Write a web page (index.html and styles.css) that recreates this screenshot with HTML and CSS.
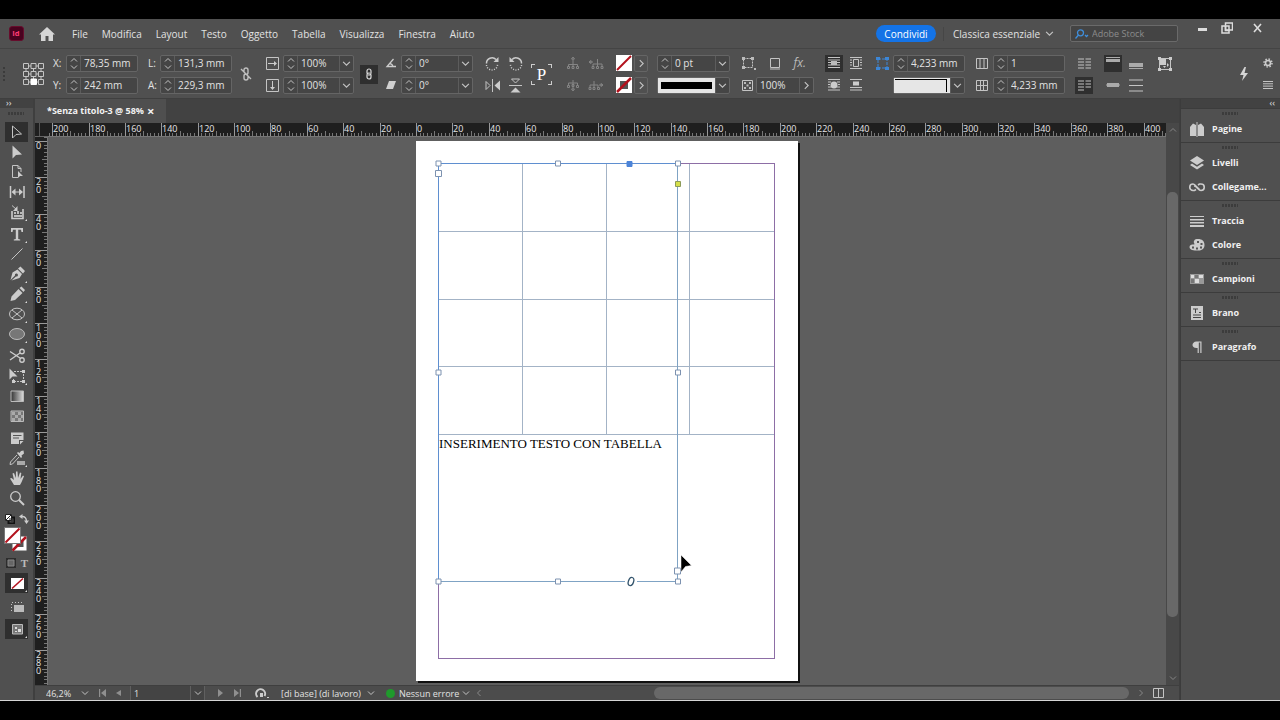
FILE: index.html
```html
<!DOCTYPE html>
<html lang="it">
<head>
<meta charset="utf-8">
<title>Senza titolo-3</title>
<link rel="stylesheet" href="styles.css">
</head>
<body>
<svg class="sprite" aria-hidden="true">
  <symbol id="down" viewBox="0 0 8 8"><path d="M1 2.500l3 3 3-3" class="ln"/></symbol>
  <symbol id="up" viewBox="0 0 8 8"><path d="M1 5.500l3-3 3 3" class="ln"/></symbol>
  <symbol id="right" viewBox="0 0 8 8"><path d="M2.500 1l3 3-3 3" class="ln"/></symbol>
  <symbol id="left" viewBox="0 0 8 8"><path d="M5.500 1l-3 3 3 3" class="ln"/></symbol>
  <symbol id="step" viewBox="0 0 14 15"><path d="M4 5.500l3-3 3 3M4 9.500l3 3 3-3" class="ln"/></symbol>
  <symbol id="none" viewBox="0 0 16 16"><path d="M0 0h16v16H0z" fill="#fff"/><path d="M1 15L15 1" stroke="#b3121d" stroke-width="2"/></symbol>
  <symbol id="none-stroke" viewBox="0 0 16 16"><path d="M0 0h16v16H0z" fill="#fff"/><path d="M4 4h8v8H4z" fill="#555"/><path d="M1 15L15 1" stroke="#b3121d" stroke-width="2.500"/></symbol>
</svg>
<div class="app">
  <header class="menubar">
    <svg class="logo" viewBox="0 0 16 16"><rect x=".5" y=".5" width="15" height="15" rx="3" fill="#49021f" stroke="#6b0a2c"/><text x="3.500" y="11" class="logo-text">Id</text></svg>
    <button class="plain home" aria-label="Home"><svg width="16" height="14" viewBox="0 0 16 14"><path d="M8 0L0 7.500h2V14h4.500V9h3v5H14V7.500h2z" fill="#d5d5d5"/></svg></button>
    <nav class="menus">
      <button class="plain">File</button><button class="plain">Modifica</button><button class="plain">Layout</button><button class="plain">Testo</button><button class="plain">Oggetto</button><button class="plain">Tabella</button><button class="plain">Visualizza</button><button class="plain">Finestra</button><button class="plain">Aiuto</button>
    </nav>
    <button class="share">Condividi</button>
    <label class="workspace"><select aria-label="Area di lavoro"><option>Classica essenziale</option></select><svg width="9" height="9"><use href="#down"/></svg></label>
    <label class="search"><svg width="14" height="10" viewBox="0 0 14 10" fill="none" stroke="#3f8edb" stroke-width="1.300"><circle cx="5.500" cy="3.800" r="3"/><path d="M3.500 6L.5 9.500M10 6l1.500 1.500L13 6"/></svg><input type="text" placeholder="Adobe Stock" aria-label="Adobe Stock"></label>
    <div class="window-buttons">
      <button class="plain" aria-label="Riduci"><svg width="10" height="12" viewBox="0 0 10 12"><path d="M0 6h9v3H0z" fill="#ddd"/></svg></button>
      <button class="plain" aria-label="Ripristina"><svg width="12" height="12" viewBox="0 0 12 12" fill="none" stroke="#ddd" stroke-width="1.500"><path d="M4.500 3V1h7v7H8M1 4h3.500v4.500H8V11H1z"/><path d="M4.500 4V8H8V4z"/></svg></button>
      <button class="plain close" aria-label="Chiudi"><svg width="10" height="12" viewBox="0 0 10 12" fill="none" stroke="#ddd" stroke-width="1.600"><path d="M1 2l7 8M8 2L1 10"/></svg></button>
    </div>
  </header>

  <section class="control" aria-label="Controllo">
    <span class="grip-v"></span>
    <svg class="refpoint" width="21" height="22" viewBox="0 0 21 22" fill="none" stroke="#c4c4c4"><path d="M5 3h3M13 3h3M5 11h3M13 11h3M5 19h3M13 19h3M3 5v3M3 13v3M10.500 5v3M10.500 13v3M18 5v3M18 13v3"/><path d="M.5.5h5v5h-5zM8 .5h5v5H8zM15.500.5h5v5h-5zM.5 8.500h5v5h-5zM8 8.500h5v5H8zM15.500 8.500h5v5h-5zM.5 16.500h5v5h-5zM15.500 16.500h5v5h-5z"/><path d="M8 16h5.500v5.500H8z" fill="#fff" stroke="#fff"/></svg>

    <div class="group g-xy">
      <label for="fx">X:</label><span class="field"><button class="step" aria-label="Incremento X"><svg width="14" height="15"><use href="#step"/></svg></button><input id="fx" value="78,35 mm"></span>
      <label for="fy">Y:</label><span class="field"><button class="step" aria-label="Incremento Y"><svg width="14" height="15"><use href="#step"/></svg></button><input id="fy" value="242 mm"></span>
    </div>
    <div class="group g-la">
      <label for="fl">L:</label><span class="field"><button class="step" aria-label="Incremento L"><svg width="14" height="15"><use href="#step"/></svg></button><input id="fl" value="131,3 mm"></span>
      <label for="fa">A:</label><span class="field"><button class="step" aria-label="Incremento A"><svg width="14" height="15"><use href="#step"/></svg></button><input id="fa" value="229,3 mm"></span>
    </div>
    <button class="plain unlink" aria-label="Vincola dimensioni"><svg width="12" height="14" viewBox="0 0 12 14" fill="none" stroke="#c0c0c0" stroke-width="1.400"><path d="M4 5V3a2 2 0 014 0v2.500a2 2 0 01-2 2M8 9v2a2 2 0 01-4 0V9a2 2 0 012-2M1 2l10 10"/></svg></button>
    <div class="group g-scale">
      <svg width="13" height="13" viewBox="0 0 13 13"><path d="M.5.5h12v12H.5z" class="ln"/><path d="M2 6h6V4l3 2.500L8 9V7H2z" fill="#ccc"/></svg>
      <span class="field"><button class="step" aria-label="Incremento scala X"><svg width="14" height="15"><use href="#step"/></svg></button><input aria-label="Scala X" value="100%"><button class="drop" aria-label="Valori scala X"><svg width="9" height="9"><use href="#down"/></svg></button></span>
      <svg width="13" height="13" viewBox="0 0 13 13"><path d="M.5.5h12v12H.5z" class="ln"/><path d="M6 2v6H4l2.500 3L9 8H7V2z" fill="#ccc"/></svg>
      <span class="field"><button class="step" aria-label="Incremento scala Y"><svg width="14" height="15"><use href="#step"/></svg></button><input aria-label="Scala Y" value="100%"><button class="drop" aria-label="Valori scala Y"><svg width="9" height="9"><use href="#down"/></svg></button></span>
    </div>
    <button class="link pressed" aria-label="Vincola scala"><svg width="8" height="12" viewBox="0 0 8 12" fill="none" stroke="#ddd" stroke-width="1.200"><path d="M2 5.500V3a2 2 0 014 0v2a2 2 0 01-3 1.700M6 6.500V9a2 2 0 01-4 0V7a2 2 0 013-1.700"/></svg></button>
    <div class="group g-angle">
      <svg width="12" height="12" viewBox="0 0 12 12" fill="none" stroke="#ccc" stroke-width="1.300"><path d="M8.500 2L2 9.500h9M5 6.500a4 4 0 013 3"/></svg>
      <span class="field"><button class="step" aria-label="Incremento rotazione"><svg width="14" height="15"><use href="#step"/></svg></button><input aria-label="Rotazione" value="0°"><button class="drop" aria-label="Valori rotazione"><svg width="9" height="9"><use href="#down"/></svg></button></span>
      <svg width="12" height="12" viewBox="0 0 12 12"><path d="M4 2h7L8 10H1z" fill="#d0d0d0"/></svg>
      <span class="field"><button class="step" aria-label="Incremento inclinazione"><svg width="14" height="15"><use href="#step"/></svg></button><input aria-label="Inclinazione" value="0°"><button class="drop" aria-label="Valori inclinazione"><svg width="9" height="9"><use href="#down"/></svg></button></span>
    </div>
    <div class="group g-rotate">
      <button class="plain" aria-label="Ruota in senso orario"><svg width="15" height="15" viewBox="0 0 15 15" fill="none" stroke="#ccc" stroke-width="1.500"><path d="M1.500 7.500A5.500 5.500 0 0111 3.500"/><path d="M1.500 9a5.500 5.500 0 0011-1" stroke-dasharray="1 1.500"/><path d="M13.500 1v5H8.500z" fill="#ccc" stroke="none"/></svg></button>
      <button class="plain" aria-label="Ruota in senso antiorario"><svg width="15" height="15" viewBox="0 0 15 15" fill="none" stroke="#ccc" stroke-width="1.500"><path d="M13.500 7.500A5.500 5.500 0 004 3.500"/><path d="M13.500 9a5.500 5.500 0 01-11-1" stroke-dasharray="1 1.500"/><path d="M1.500 1v5h5z" fill="#ccc" stroke="none"/></svg></button>
      <button class="plain" aria-label="Rifletti orizzontale"><svg width="15" height="13" viewBox="0 0 15 13"><path d="M1 2.500v8L5 6.500z" class="ln"/><path d="M15 1.500v10L9.500 6.500z" fill="#ccc"/><path d="M7.500 0v13" class="ln"/></svg></button>
      <button class="plain" aria-label="Rifletti verticale"><svg width="15" height="15" viewBox="0 0 15 15"><path d="M3.500 1h8L7.500 5z" class="ln"/><path d="M2.500 14.500h10l-5-5z" fill="#ccc"/><path d="M1 7.500h13" class="ln"/></svg></button>
    </div>
    <div class="para">P</div>
    <div class="group g-tree">
      <svg width="14" height="14" viewBox="0 0 14 14" class="dim"><path d="M7 3v4M2.500 11V8.500h9V11M7 7v4"/><path d="M1.500 10.500h2v2h-2zM6 10.500h2v2H6zM10.500 10.500h2v2h-2z"/><path d="M5.500 3L7 1l1.500 2z"/></svg>
      <svg width="16" height="14" viewBox="0 0 16 14" class="dim"><path d="M1 6h4M5 11V8h9v3M9.500 3v8"/><path d="M4 10.500h2v2H4zM8.500 10.500h2v2h-2zM13 10.500h2v2h-2z"/><path d="M3 4.500L1 6l2 1.500z"/></svg>
      <svg width="14" height="14" viewBox="0 0 14 14" class="dim"><path d="M7 2v9M2.500 8V5h9v3"/><path d="M1.500 7.500h2v2h-2zM6 6.500h2v2H6zM10.500 7.500h2v2h-2z"/><path d="M5.500 11L7 13l1.500-2z"/></svg>
      <svg width="16" height="14" viewBox="0 0 16 14" class="dim"><path d="M2 10V7h8v3M6 3v7M11 7h4"/><path d="M1 9.500h2v2H1zM5 9.500h2v2H5zM9.500 9.500h2v2h-2z"/><path d="M13 5.500L15 7l-2 1.500z"/></svg>
    </div>
    <div class="group g-fill">
      <button class="plain" aria-label="Riempimento"><svg width="16" height="16"><use href="#none"/></svg></button><button class="drop boxed" aria-label="Opzioni riempimento"><svg width="9" height="9"><use href="#right"/></svg></button>
      <button class="plain" aria-label="Traccia"><svg width="16" height="16"><use href="#none-stroke"/></svg></button><button class="drop boxed" aria-label="Opzioni traccia"><svg width="9" height="9"><use href="#right"/></svg></button>
    </div>
    <div class="group g-weight">
      <span class="field"><button class="step" aria-label="Incremento spessore"><svg width="14" height="15"><use href="#step"/></svg></button><input aria-label="Spessore" value="0 pt"><button class="drop" aria-label="Valori spessore"><svg width="9" height="9"><use href="#down"/></svg></button></span>
      <span class="field"><span class="stroke-preview"></span><button class="drop" aria-label="Tipo di traccia"><svg width="9" height="9"><use href="#down"/></svg></button></span>
    </div>
    <div class="effects">
      <div class="effects-row">
        <svg width="14" height="13" viewBox="0 0 14 13"><path d="M1.500 1.500h9v9h-9z" class="ln" stroke-dasharray="2 1"/><path d="M0 0h3v3H0zM9 0h3v3H9zM0 9h3v3H0zM12 11h2v2h-2z" fill="#bbb"/></svg>
        <svg width="12" height="13" viewBox="0 0 12 13"><path d="M1 11h10v2H1z" fill="#888"/><path d="M1.500 1.500h9v9h-9z" class="ln"/></svg>
        <span class="fx">fx.</span>
      </div>
      <div class="effects-row">
        <svg width="11" height="11" viewBox="0 0 11 11"><path d="M.5.5h10v10H.5z" class="ln"/><path d="M2 2h2v2H2zM7 2h2v2H7zM4.500 4.500h2v2h-2zM2 7h2v2H2zM7 7h2v2H7z" fill="#bbb"/></svg>
        <span class="field opacity"><input aria-label="Opacità" value="100%"><button class="drop" aria-label="Valori opacità"><svg width="9" height="9"><use href="#right"/></svg></button></span>
      </div>
    </div>
    <div class="group g-wrap">
      <button class="plain pressed" aria-label="Nessun testo attorno"><svg width="12" height="12" viewBox="0 0 12 12"><path d="M0 .5h12M0 3h12M0 5.500h12M0 8h12M0 10.500h12" class="ln"/><path d="M3 4h6v4H3z" fill="#bbb"/></svg></button>
      <button class="plain" aria-label="Testo attorno al rettangolo"><svg width="12" height="12" viewBox="0 0 12 12"><path d="M0 .5h12M0 3h2M10 3h2M0 5.500h2M10 5.500h2M0 8h2M10 8h2M0 11.500h12M3.500 2.500h5v7h-5z" class="ln"/></svg></button>
      <button class="plain" aria-label="Testo attorno alla forma"><svg width="12" height="12" viewBox="0 0 12 12"><path d="M0 .5h12M0 3h3M9 3h3M0 5.500h2M10 5.500h2M0 8h3M9 8h3M0 11h12" class="ln"/><circle cx="6" cy="6" r="3.500" fill="#ccc"/></svg></button>
      <button class="plain" aria-label="Salta oggetto"><svg width="12" height="12" viewBox="0 0 12 12"><path d="M0 .5h12M0 8.500h12M0 11h12" class="ln"/><path d="M3 2.500h6v4H3z" fill="#ccc"/></svg></button>
    </div>
    <div class="group g-corner">
      <svg width="13" height="13" viewBox="0 0 13 13" fill="#3c86d6"><path d="M2 2h9v9H2z" fill="none" stroke="#3c86d6" stroke-dasharray="3 1"/><path d="M0 0h4v3H0zM9 0h4v3H9zM0 10h4v3H0zM9 10h4v3H9z"/></svg>
      <span class="field"><button class="step" aria-label="Incremento angolo"><svg width="14" height="15"><use href="#step"/></svg></button><input aria-label="Dimensione angolo" value="4,233 mm"></span>
      <span></span>
      <span class="field"><span class="corner-preview"></span><button class="drop" aria-label="Forma angolo"><svg width="9" height="9"><use href="#down"/></svg></button></span>
    </div>
    <div class="group g-cols">
      <svg width="12" height="11" viewBox="0 0 12 11"><path d="M.5.5h11v10H.5zM4 .5v10M8 .5v10" class="ln"/></svg>
      <span class="field"><button class="step" aria-label="Incremento colonne"><svg width="14" height="15"><use href="#step"/></svg></button><input aria-label="Colonne" value="1"></span>
      <svg width="12" height="11" viewBox="0 0 12 11"><path d="M.5.5h11v10H.5zM4.500.5v10M7.500.5v10M0 5.500h12" class="ln"/></svg>
      <span class="field"><button class="step" aria-label="Incremento spaziatura"><svg width="14" height="15"><use href="#step"/></svg></button><input aria-label="Spaziatura" value="4,233 mm"></span>
    </div>
    <div class="group g-balance">
      <button class="plain" aria-label="Bilancia colonne"><svg width="13" height="11" viewBox="0 0 13 11"><path d="M0 1h6M0 4h6M0 7h6M0 10h6M7.500 1h5.500M7.500 4h5.500M7.500 7h5.500M7.500 10h5.500" class="ln"/></svg></button>
      <button class="plain pressed" aria-label="Non bilanciare colonne"><svg width="13" height="11" viewBox="0 0 13 11"><path d="M0 1h6M0 4h6M0 7h6M0 10h6M7.500 1h5.500M7.500 4h5.500M7.500 7h5.500" class="ln"/></svg></button>
    </div>
    <div class="group g-valign">
      <button class="plain pressed" aria-label="Allinea in alto"><svg width="14" height="12" viewBox="0 0 14 12"><path d="M0 0h14v1H0zM0 2h14v3H0z" fill="#aaa"/></svg></button>
      <button class="plain" aria-label="Allinea in basso"><svg width="14" height="12" viewBox="0 0 14 12"><path d="M0 6h14v4H0zM0 11h14v1H0z" fill="#aaa"/></svg></button>
      <button class="plain" aria-label="Allinea al centro"><svg width="14" height="12" viewBox="0 0 14 12"><path d="M0 6h14" stroke="#aaa"/><path d="M1 4h12v4H1z" fill="#aaa"/></svg></button>
      <button class="plain" aria-label="Giustifica"><svg width="14" height="13" viewBox="0 0 14 13"><path d="M0 1h14M0 6.500h14M0 12h14" class="ln"/></svg></button>
    </div>
    <button class="plain fit" aria-label="Adatta"><svg width="14" height="14" viewBox="0 0 14 14"><path d="M1.500 1.500h11v11h-11z" class="ln"/><path d="M0 0h3v3H0zM11 0h3v3h-3zM0 11h3v3H0zM11 11h3v3h-3zM2 2h6v6H2zM9 6l2 2-2 2zM5 9h3l-1.500 2z" fill="#ccc"/></svg></button>
    <div class="control-end">
      <button class="plain" aria-label="Azioni rapide"><svg width="10" height="14" viewBox="0 0 10 14"><path d="M5.500 0L1 8h3.500L3 14l6-8H5.500L7 0z" fill="#d5d5d5"/></svg></button>
      <div class="group">
        <button class="plain" aria-label="Impostazioni"><svg width="10" height="10" viewBox="0 0 10 10" fill="none" stroke="#ccc"><circle cx="5" cy="5" r="2.500" stroke-width="1.600"/><circle cx="5" cy="5" r="4" stroke-width="1.500" stroke-dasharray="1.500 1.640"/></svg></button>
        <button class="plain" aria-label="Menu pannello"><svg width="10" height="8" viewBox="0 0 10 8"><path d="M0 .5h10M0 2.800h10M0 5.100h10M0 7.500h10" class="ln"/></svg></button>
      </div>
    </div>
  </section>

  <main class="work">
    <aside class="tools" aria-label="Strumenti">
      <div class="collapse">››</div>
      <span class="grip"></span>
      <div class="tool-list">
        <button class="tool pressed" aria-label="Selezione"><svg viewBox="0 0 18 18"><path d="M4.500 3v12l3.500-3.500 5.500-.5z" class="ln"/></svg></button>
        <button class="tool" aria-label="Selezione diretta"><svg viewBox="0 0 18 18"><path d="M4.500 2.500v13L8 12l6-.5z" fill="#ccc"/></svg></button>
        <button class="tool" aria-label="Pagina"><svg viewBox="0 0 18 18"><path d="M10 14.500H4.500v-12H10l3 3V9M10 2.500v3h3" class="ln"/><path d="M10 8v7l2-2h3z" fill="#ccc"/></svg></button>
        <button class="tool" aria-label="Spazio"><svg viewBox="0 0 18 18"><path d="M2.500 3v12M16 3v12" stroke="#ccc" stroke-width="1.500"/><path d="M5 9h9" stroke="#ccc"/><path d="M7.500 5.500L3.500 9l4 3.500zM11 5.500L15 9l-4 3.500z" fill="#ccc"/></svg></button>
        <button class="tool more" aria-label="Raccolta contenuto"><svg viewBox="0 0 18 18"><path d="M4 8v7.500h11V6" stroke="#ccc" stroke-width="1.600" fill="none"/><path d="M6 9h2v2H6zM9 8h2v3H9zM12 9h2v2h-2zM6 12h8v2H6z" fill="#bbb"/><path d="M4 2.500L9 7" class="ln"/><path d="M9.500 3v5H5z" fill="#ccc"/></svg></button>
        <button class="tool more spaced" aria-label="Testo"><svg viewBox="0 0 18 18"><path d="M3 3h12v4h-1.500L13 4.700h-2.800V14l2 .5v1H5.800v-1l2-.5V4.700H5L4.500 7H3z" fill="#ccc"/></svg></button>
        <button class="tool" aria-label="Linea"><svg viewBox="0 0 18 18"><path d="M3.500 14.500l11-11" class="ln"/></svg></button>
        <button class="tool more" aria-label="Penna"><svg viewBox="0 0 18 18"><path d="M10 3.500L12.500 1.500 17 6l-2 2.500zM9.500 4.500l4.500 4.500-2.500 4-8 2.500L8 11.500A1.500 1.500 0 107 10.500L2.500 15l2-7.500z" fill="#ccc"/></svg></button>
        <button class="tool more" aria-label="Matita"><svg viewBox="0 0 18 18"><path d="M11.500 3L13.500 1.500 17 5l-1.500 2zM10.500 4L14.500 8 7 15 2.500 16l1-4.500z" fill="#ccc"/></svg></button>
        <button class="tool more" aria-label="Cornice ellittica"><svg viewBox="0 0 18 18"><ellipse cx="9" cy="9" rx="7.500" ry="5.800" class="ln"/><path d="M4 5l10 8M14 5L4 13" class="ln"/></svg></button>
        <button class="tool more" aria-label="Ellisse"><svg viewBox="0 0 18 18"><ellipse cx="9" cy="9" rx="7.500" ry="5.500" fill="#777" stroke="#bbb"/></svg></button>
        <button class="tool spaced" aria-label="Forbici"><svg viewBox="0 0 18 18" fill="none" stroke="#ccc" stroke-width="1.400"><path d="M2 4.500l10 6.500M2 13L12 6"/><circle cx="14" cy="4.500" r="2.200"/><circle cx="14" cy="13" r="2.200"/></svg></button>
        <button class="tool more" aria-label="Trasformazione libera"><svg viewBox="0 0 18 18"><path d="M6 4.500h9.500v10h-10V11" class="ln" stroke-dasharray="2 1"/><path d="M1.500 1.500v11l3-3h5zM14 3h3v3h-3zM14 13h3v3h-3zM4 13h3v3H4z" fill="#ccc"/></svg></button>
        <button class="tool" aria-label="Sfumatura"><svg viewBox="0 0 18 18"><defs><linearGradient id="grad"><stop stop-color="#333"/><stop offset="1" stop-color="#ddd"/></linearGradient></defs><path d="M3 4h12.500v10.500H3z" fill="url(#grad)" stroke="#bbb"/></svg></button>
        <button class="tool" aria-label="Sfuma"><svg viewBox="0 0 18 18"><path d="M3 4h12.500v10.500H3z" fill="#777" stroke="#bbb"/><path d="M4 5h3v3H4zM10 5h3v3h-3zM7 8h3v3H7zM13 8h2v3h-2zM4 11h3v3H4zM10 11h3v3h-3z" fill="#aaa"/></svg></button>
        <button class="tool spaced" aria-label="Nota"><svg viewBox="0 0 18 18"><path d="M3 3.500h12.500V11H11v4H3z" fill="#ccc"/><path d="M12 12h3.500L12 15.500z" fill="#ccc"/><path d="M5 6.500h8.500M5 9h6" stroke="#555"/></svg></button>
        <button class="tool more" aria-label="Contagocce"><svg viewBox="0 0 18 18"><path d="M9 6l-6.500 7-.5 2.500 2.500-.5L11 8" class="ln"/><path d="M9 4l1-1 1.500 1L13 2l2.500-.5.5 3-2.500 2 .5 1.500-1 1z" fill="#ccc"/><path d="M9 12h8v4H9z" fill="#aaa"/></svg></button>
        <button class="tool" aria-label="Mano"><svg viewBox="0 0 18 18"><path d="M6 16L2 9.500 3.500 9 6 11 4.500 4.500 6 4l1.800 5L8 2.500h1.500L10 9l2-5.500 1.300.5L12.500 10 15 6.500l1 .7-2.500 6L12 16z" fill="#ccc"/></svg></button>
        <button class="tool" aria-label="Zoom"><svg viewBox="0 0 18 18" fill="none" stroke="#ccc" stroke-width="1.300"><circle cx="7.500" cy="7.500" r="4.800"/><path d="M11 11l5 5" stroke-width="2"/></svg></button>
      </div>
      <div class="mini-row">
        <svg width="10" height="10" viewBox="0 0 10 10"><path d="M3.500 3.500h6v6h-6z" fill="none" stroke="#111" stroke-width="2"/><path d="M.5.5h6v6h-6z" fill="#fff" stroke="#222"/><path d="M1 6l5-5M4 5h3v3" stroke="#222" fill="none"/></svg>
        <svg width="10" height="10" viewBox="0 0 10 10"><path d="M3 2.500c3 0 4.500 1 4.500 5" fill="none" stroke="#ccc" stroke-width="1.300"/><path d="M3.500 0v5L0 2.500zM5 6.500h5L7.500 10z" fill="#ccc"/></svg>
      </div>
      <svg class="swatches" width="24" height="25" viewBox="0 0 24 25"><path d="M8 9h15v15H8z" fill="#fff" stroke="#555"/><path d="M12.500 13h7v7h-7z" fill="#555"/><path d="M8.500 23.500L22 10" stroke="#b3121d" stroke-width="2.500"/><path d="M.5.500h16v16H.5z" fill="#fff" stroke="#777"/><path d="M1.500 15.500l14-14" stroke="#b3121d" stroke-width="2"/></svg>
      <div class="mini-row target"><svg width="10" height="10" viewBox="0 0 10 10"><path d="M0 0h10v10H0z" fill="#2d2d2d"/><path d="M2 2h6v6H2z" fill="#666" stroke="#888"/></svg><span class="t-small">T</span></div>
      <button class="tool pressed more" aria-label="Applica nessuno"><svg viewBox="0 0 18 18"><path d="M3 4h13v11H3z" fill="#fff"/><path d="M4 14.500L15 4.500" stroke="#b3121d" stroke-width="1.600"/></svg></button>
      <button class="tool view" aria-label="Vista"><svg viewBox="0 0 18 18"><path d="M6 8h10v7H6z" fill="#bbb"/><path d="M3.500 14V5.500H16" class="ln" stroke-dasharray="1 2"/></svg></button>
      <button class="tool pressed more view" aria-label="Modalità schermo"><svg viewBox="0 0 18 18"><path d="M4.500 4.500h10v9.500h-10z" fill="#777" stroke="#bbb"/><path d="M7 7h2v2H7zM10 9h3v3h-3zM7 11h2v1H7z" fill="#ddd"/></svg></button>
    </aside>

    <section class="document">
      <div class="tabs"><div class="tab"><span>*Senza titolo-3 @ 58%</span><button class="plain" aria-label="Chiudi scheda">×</button></div></div>
      <div class="view-grid">
        <div class="ruler-corner"></div>
        <svg class="ruler ruler-h" id="ruler-h"></svg>
        <div class="scroll-v">
          <svg width="8" height="8" class="faint"><use href="#up"/></svg>
          <div class="track-v"><div class="thumb-v"></div></div>
          <svg width="8" height="8" class="faint"><use href="#down"/></svg>
        </div>
        <svg class="ruler ruler-v" id="ruler-v"></svg>
        <div class="canvas">
          <article class="page" id="page">
            <div class="margins">
              <table class="grid-table"><tbody>
                <tr><td></td><td></td><td></td><td></td></tr>
                <tr><td></td><td></td><td></td><td></td></tr>
                <tr><td></td><td></td><td></td><td></td></tr>
                <tr><td></td><td></td><td></td><td></td></tr>
              </tbody></table>
              <p class="story">INSERIMENTO TESTO CON TABELLA</p>
            </div>
            <svg class="selection" viewBox="0 0 382 540" fill="#fff" stroke="#7d92b0">
              <path d="M22.500 440.500V22.500H262" fill="none" stroke="#5f8fd0"/>
              <path d="M261.500 22.500v418H22.500" fill="none" stroke="#7fa3c4"/>
              <path d="M20 20h5v5h-5zM139.500 20h5v5h-5zM259.500 20h5v5h-5zM20 229h5v5h-5zM259.500 229h5v5h-5zM20 438h5v5h-5zM139.500 438h5v5h-5zM259.500 438h5v5h-5z"/>
              <path d="M19.500 29.500h6v6h-6zM258.500 427h6v6h-6z"/>
              <path d="M211 20.500h5v5h-5z" fill="#4d84d8" stroke="#4d84d8"/>
              <path d="M259.500 40.500h5v5h-5z" fill="#d5e04a" stroke="#8c9a5a"/>
              <path d="M209 440.500h12" stroke="#fff" stroke-width="3"/>
              <ellipse cx="215" cy="440.500" rx="2.600" ry="4.200" transform="rotate(18 215 440.500)" stroke="#35566e" stroke-width="1.300"/>
              <path d="M265 414v17l4.500-5.500 6-1z" fill="#000" stroke="#fff" stroke-width=".5"/>
            </svg>
          </article>
        </div>
      </div>
      <footer class="status">
        <label class="pick zoom"><select aria-label="Zoom"><option>46,2%</option></select><svg width="8" height="8"><use href="#down"/></svg></label>
        <button class="plain nav" aria-label="Prima pagina"><svg width="7" height="8" viewBox="0 0 7 8"><path d="M0 0h1.200v8H0zM7 0v8L2 4z"/></svg></button>
        <button class="plain nav prev" aria-label="Pagina precedente"><svg width="5" height="8" viewBox="0 0 5 8"><path d="M5 1v6L0 4z"/></svg></button>
        <span class="page-field"><input aria-label="Pagina" value="1"><button class="plain" aria-label="Elenco pagine"><svg width="8" height="8"><use href="#down"/></svg></button></span>
        <button class="plain nav next" aria-label="Pagina successiva"><svg width="5" height="8" viewBox="0 0 5 8"><path d="M0 0v8l5-4z"/></svg></button>
        <button class="plain nav last" aria-label="Ultima pagina"><svg width="7" height="8" viewBox="0 0 7 8"><path d="M5.800 0H7v8H5.800zM0 0v8l5-4z"/></svg></button>
        <svg class="open-icon" width="14" height="11" viewBox="0 0 14 11"><path d="M2.500 9A4.500 4.500 0 119.500 8" fill="none" stroke="#ccc" stroke-width="2"/><path d="M5 5h3v4H5zM12 9h2v1h-2z" fill="#ccc"/></svg>
        <label class="pick profile"><select aria-label="Profilo di verifica"><option>[di base] (di lavoro)</option></select><svg width="8" height="8"><use href="#down"/></svg></label>
        <label class="pick preflight"><span class="dot"></span><select aria-label="Verifica preliminare"><option>Nessun errore</option></select><svg width="8" height="8"><use href="#down"/></svg></label>
        <svg width="8" height="8" class="faint arrow-left"><use href="#left"/></svg>
        <div class="track-h"><div class="thumb-h"></div></div>
        <svg width="8" height="8" class="faint"><use href="#right"/></svg>
        <button class="plain split" aria-label="Dividi finestra"><svg width="11" height="10" viewBox="0 0 11 10"><path d="M.5.5h10v9H.5zM5.500.5v9" class="ln"/></svg></button>
      </footer>
    </section>

    <aside class="dock" aria-label="Pannelli">
      <div class="collapse">‹‹</div>
      <div class="panel"><span class="grip"></span><button><svg viewBox="0 0 16 16"><path d="M7 15H1V6l3-3.500L7 4zM9 15h6V6l-3-3.500L9 4z" fill="#ccc"/><path d="M8 1v15" class="ln"/></svg>Pagine</button></div>
      <div class="panel"><span class="grip"></span>
        <button><svg viewBox="0 0 16 16"><path d="M8 1l7 4.500L8 10 1 5.500z" fill="#ccc"/><path d="M3 8.500L1 10l7 4.500L15 10l-2-1.500-5 3.200z" fill="#ccc"/></svg>Livelli</button>
        <button><svg viewBox="0 0 16 16" fill="none" stroke="#ccc" stroke-width="1.600"><path d="M7 10.500L5.500 11.500H4a3.200 3.200 0 010-6.500c3 0 3.500 5 6.500 5"/><path d="M9 6l1.500-1H12a3.200 3.200 0 010 6.500c-3 0-4-5-7-4.500"/></svg>Collegame...</button></div>
      <div class="panel"><span class="grip"></span>
        <button><svg viewBox="0 0 16 16"><path d="M1 3h14v1H1zM1 6h14v1.500H1zM1 9h14v1.500H1zM1 12h14v2H1z" fill="#ccc"/></svg>Traccia</button>
        <button><svg viewBox="0 0 16 16"><path d="M9 2c4 0 6.500 2 6.500 6 0 3-2 5.500-6 5.500-5 0-9-.5-9-3.500 0-2 2-2.500 4-2.500C7 7.500 4 6 5 4s2-2 4-2z" fill="#ccc"/><path d="M8 4h2v2H8zM11.500 6h2v2h-2zM11 9.500h2v2h-2zM7 10.500h2v2H7zM3 9.500h2v2H3z" fill="#555"/></svg>Colore</button></div>
      <div class="panel"><span class="grip"></span><button><svg viewBox="0 0 16 16"><path d="M1 3h14v10H1z" fill="#999"/><path d="M2 4h3v3H2zM10 4h4v3h-4zM6 8h4v4H6z" fill="#ddd"/><path d="M6 4h3v3H6zM2 8h3v4H2z" fill="#777"/></svg>Campioni</button></div>
      <div class="panel"><span class="grip"></span><button><svg viewBox="0 0 16 16"><path d="M2 1h12v14H2z" fill="#ccc"/><path d="M4 4h5M6.500 4v4M10 7.500h2M4 10h8M4 12.500h8" stroke="#444" fill="none"/></svg>Brano</button></div>
      <div class="panel"><span class="grip"></span><button><svg viewBox="0 0 16 16"><path d="M12.500 2.500V14h-1.200V3.500h-1.500V14H8.600V9C5 9.500 3.500 7.500 3.500 6s1.500-3.500 4-3.500z" fill="#ccc"/></svg>Paragrafo</button></div>
    </aside>
  </main>
</div>
<script src="rulers.js"></script>
</body>
</html>
```

FILE: styles.css
```css
* { box-sizing: border-box; }
html, body { height: 100%; }
body {
  margin: 0;
  padding: 19px 0;
  background: #000;
  color: #e2e2e2;
  font: 10px/14px "Open Sans", "Noto Sans", sans-serif;
  overflow: hidden;
}
svg { display: block; flex: none; }
.sprite { position: absolute; width: 0; height: 0; }
.ln { fill: none; stroke: #c4c4c4; stroke-width: 1; }
.faint { opacity: .5; }
button, input, select { font: inherit; color: inherit; margin: 0; padding: 0; border: 0; background: none; border-radius: 0; }
select { appearance: none; }
.plain { display: flex; align-items: center; justify-content: center; }
.pressed { background: #2f2f2f; }

.app { display: flex; flex-direction: column; height: 100%; background: #505050; border-bottom: 1px solid #d5d5d5; }

/* Menu bar */
.menubar { display: flex; align-items: center; height: 30px; flex: none; padding-left: 9px; border-bottom: 1px solid #444; }
.logo { width: 15px; height: 15px; }
.logo-text { font: bold 8px "Open Sans", sans-serif; fill: #ff3d78; }
.home { margin-left: 15px; }
.menus { display: flex; gap: 14px; margin-left: 17px; }
.share { margin-left: auto; width: 60px; height: 17px; border-radius: 9px; background: #1473e6; color: #fff; }
.workspace { display: flex; align-items: center; gap: 4px; margin-left: 7px; padding-left: 9px; border-left: 1px solid #464646; }
.search { display: flex; align-items: center; gap: 3px; width: 108px; height: 17px; margin-left: 16px; padding-left: 4px; border: 1px solid #6a6a6a; border-radius: 2px; background: #444; }
.search input { flex: 1; min-width: 0; font-size: 9px; }
.search input::placeholder { color: #8c8c8c; opacity: 1; }
.window-buttons { display: flex; gap: 13px; margin: 0 17px 12px 20px; }
.close { margin-left: 7px; }

/* Control strip */
.control { display: flex; align-items: center; height: 50px; flex: none; padding: 1px 7px 0 3px; border-bottom: 1px solid #3f3f3f; }
.grip-v { width: 3px; height: 14px; border-left: 2px dotted #3b3b3b; }
.refpoint { margin-left: 17px; }
.group { display: grid; grid-template-rows: 17px 17px; row-gap: 5px; align-items: center; flex: none; }
.group > label { line-height: 17px; }
.group > .plain { height: 17px; }
.g-xy { margin-left: 9px; grid-template-columns: 13px 72px; }
.g-la { margin-left: 10px; grid-template-columns: 12px 72px; }
.unlink { margin-left: 8px; }
.g-scale { margin-left: 14px; grid-template-columns: 17px 71px; }
.link { display: flex; align-items: center; justify-content: center; width: 18px; height: 19px; margin-left: 6px; }
.g-angle { margin-left: 7px; grid-template-columns: 16px 72px; }
.g-rotate { margin-left: 12px; grid-template-columns: 15px 15px; column-gap: 8px; }
.para {
  width: 21px; height: 21px; margin-left: 8px; flex: none; color: #fff; text-align: center;
  font: 17px/21px "Liberation Serif", serif;
  background:
    linear-gradient(#ccc, #ccc) 0 0 / 4px 1px, linear-gradient(#ccc, #ccc) 0 0 / 1px 4px,
    linear-gradient(#ccc, #ccc) 100% 0 / 4px 1px, linear-gradient(#ccc, #ccc) 100% 0 / 1px 4px,
    linear-gradient(#ccc, #ccc) 0 100% / 4px 1px, linear-gradient(#ccc, #ccc) 0 100% / 1px 4px,
    linear-gradient(#ccc, #ccc) 100% 100% / 4px 1px, linear-gradient(#ccc, #ccc) 100% 100% / 1px 4px;
  background-repeat: no-repeat;
}
.g-tree { margin-left: 14px; grid-template-columns: 14px 16px; column-gap: 8px; }
.dim { fill: none; stroke: #858585; }
.g-fill { margin-left: 11px; grid-template-columns: 17px 14px; column-gap: 2px; }
.g-weight { margin-left: 9px; grid-template-columns: 73px; }
.effects { display: grid; gap: 5px; width: 72px; margin-left: 12px; flex: none; }
.effects-row { display: flex; align-items: center; justify-content: space-between; height: 17px; }
.effects-row:first-child { padding-right: 8px; }
.fx { font: italic 12px/14px "Open Sans", sans-serif; color: #bbb; }
.opacity { width: 58px; }
.g-wrap { margin-left: 11px; grid-template-columns: 18px 18px; column-gap: 4px; }
.g-corner { margin-left: 11px; grid-template-columns: 15px 72px; column-gap: 2px; }
.g-cols { margin-left: 11px; grid-template-columns: 13px 72px; column-gap: 4px; }
.g-balance { margin-left: 10px; grid-template-columns: 18px; }
.g-valign { margin-left: 11px; grid-template-columns: 18px 18px; column-gap: 5px; }
.fit { margin: 7px 0 0 13px; align-self: flex-start; }
.control-end { display: flex; align-items: center; gap: 14px; margin-left: auto; }

.field { display: flex; height: 17px; border: 1px solid #656565; border-radius: 2px; background: #454545; }
.field input { flex: 1; min-width: 0; padding-left: 3px; }
.step, .drop { display: flex; align-items: center; justify-content: center; width: 14px; flex: none; }
.step { border-right: 1px solid #5c5c5c; }
.field .drop { border-left: 1px solid #5c5c5c; }
.boxed { height: 17px; border: 1px solid #656565; border-radius: 2px; }
.stroke-preview { flex: 1; border: solid #e6e6e6; border-width: 4px 3px; background: #000; }
.corner-preview { flex: 1; border: 1px solid #e6e6e6; border-right-width: 3px; background: #e6e6e6; box-shadow: inset -1px 1px #000; }

/* Work area */
.work { display: grid; grid-template-columns: 33px 1fr 100px; flex: 1; min-height: 0; }
.collapse { height: 9px; font: 9px/7px "Open Sans", sans-serif; background: #424242; }
.grip { display: block; width: 16px; height: 3px; background: repeating-linear-gradient(90deg, #3c3c3c 0 2px, #505050 2px 3px); }

.tools { display: flex; flex-direction: column; background: #505050; }
.tools .collapse { padding-left: 6px; }
.tools .grip { margin: 4px 0 7px 8px; }
.tool { display: flex; align-items: center; justify-content: center; position: relative; width: 23px; height: 20px; flex: none; margin-left: 5px; }
.tool svg { width: 18px; height: 18px; }
.tool.more::after { content: ""; position: absolute; right: 1px; bottom: 1px; border: 1px solid #ddd; border-top-color: transparent; border-left-color: transparent; }
.spaced { margin-top: 2px; }
.mini-row { display: flex; align-items: center; justify-content: space-between; height: 12px; padding: 0 4px 0 5px; margin-top: 5px; }
.swatches { margin: 2px 0 0 4px; }
.target { padding: 0 5px 0 6px; margin: 5px 0 4px; }
.t-small { font: bold 11px/12px "Liberation Serif", serif; color: #bbb; }
.view { margin-top: 3px; }

/* Document window */
.document { display: flex; flex-direction: column; min-width: 0; padding: 0 1px 0 2px; background: #3f3f3f; }
.tabs { height: 24px; flex: none; background: #424242; }
.tab { display: flex; align-items: center; gap: 3px; width: max-content; height: 24px; padding: 0 12px; background: #4f4f4f; color: #f2f2f2; font-size: 9px; font-weight: bold; }
.tab button { font-size: 13px; line-height: 12px; }
.view-grid { display: grid; grid-template: 14px 1fr / 13px 1fr 13px; flex: 1; min-height: 0; border-bottom: 1px solid #3f3f3f; }
.ruler { width: 100%; height: 100%; background: #1f1f1f; font: 9px "Open Sans", sans-serif; fill: #e6e6e6; overflow: hidden; }
.ruler-h { border-bottom: 1px solid #777; }
.ruler-v { border-right: 1px solid #777; }
.ruler-corner { background: #1f1f1f linear-gradient(#555, #555) 4px 0 / 1px 100% no-repeat; border-bottom: 1px solid #666; }
.canvas { display: flex; align-items: center; justify-content: center; background: #5e5e5e; overflow: hidden; }
.scroll-v { grid-column: 3; grid-row: 1 / 3; display: flex; flex-direction: column; align-items: center; padding: 3px 0; background: #484848; }
.track-v { flex: 1; width: 11px; padding: 58px 0 57px; }
.thumb-v { height: 100%; border-radius: 5px; background: #686868; }

.page { position: relative; width: 382px; height: 540px; flex: none; padding: 22px; background: #fff; box-shadow: 2px 2px #111; }
.margins { width: 337px; height: 496px; border: 1px solid #8d6ea6; }
.grid-table { border-spacing: 0; width: 335px; table-layout: fixed; }
.grid-table td { height: 68px; padding: 0; border: solid #a3b3c6; border-width: 0 1px 1px 0; }
.grid-table td:last-child { border-right-width: 0; }
.grid-table tr:nth-child(3) td { height: 67px; }
.story { margin: 0; color: #000; font: 13px/17px "Liberation Serif", serif; white-space: nowrap; }
.selection { position: absolute; inset: 0; width: 100%; height: 100%; }

/* Status bar */
.status { display: flex; align-items: center; height: 14px; flex: none; padding: 0 3px 0 11px; background: #4c4c4c; font-size: 9px; line-height: 13px; }
.pick { display: flex; align-items: center; }
.pick svg { margin-left: auto; }
.zoom { width: 43px; }
.nav { margin-left: 10px; }
.nav svg { fill: #8f8f8f; }
.page-field { display: flex; width: 75px; height: 14px; margin-left: 9px; border: 1px solid #606060; border-width: 0 1px; background: #444; }
.page-field input { flex: 1; min-width: 0; padding-left: 3px; }
.page-field button { width: 14px; border-left: 1px solid #606060; }
.next { margin-left: 13px; }
.last { margin-left: 11px; }
.open-icon { margin-left: 14px; }
.profile { width: 94px; margin-left: 12px; }
.preflight { width: 84px; margin-left: 11px; }
.dot { width: 9px; height: 9px; margin-right: 4px; border-radius: 50%; background: #1f9a2c; }
.arrow-left { margin-left: 5px; }
.track-h { flex: 1; padding: 0 8px 0 171px; }
.thumb-h { height: 12px; border-radius: 6px; background: #686868; }
.split { margin: 0 12px 0 8px; }

/* Panel dock */
.dock { border-left: 1px solid #3c3c3c; background: #505050; }
.dock .collapse { height: 10px; padding-right: 5px; text-align: right; border-bottom: 1px solid #3c3c3c; }
.panel { padding-bottom: 1px; border-bottom: 1px solid #3c3c3c; }
.panel .grip { margin: 3px 0 2px 41px; }
.panel button { display: flex; align-items: center; gap: 7px; width: 100%; height: 24px; padding-left: 8px; color: #f0f0f0; font-size: 9px; font-weight: bold; }
.panel button svg { width: 16px; height: 16px; }
```

FILE: rulers.js
```js
// Draws both rulers in millimetres, with zero on the top left corner of the page.
(function () {
  var NS = "http://www.w3.org/2000/svg";
  var page = document.getElementById("page");

  function add(parent, name, attrs, text) {
    var el = document.createElementNS(NS, name);
    Object.keys(attrs).forEach(function (k) { el.setAttribute(k, attrs[k]); });
    if (text !== undefined) el.textContent = text;
    parent.appendChild(el);
    return el;
  }

  function draw(id, vertical) {
    var svg = document.getElementById(id);
    var box = svg.getBoundingClientRect();
    var sheet = page.getBoundingClientRect();
    var scale = sheet.width / 210;
    var origin = vertical ? sheet.top - box.top : sheet.left - box.left;
    var length = vertical ? box.height : box.width;
    var depth = vertical ? box.width : box.height;
    svg.textContent = "";
    for (var mm = Math.ceil(-origin / scale / 2) * 2; origin + mm * scale < length; mm += 2) {
      var at = Math.round(origin + mm * scale);
      var size = mm % 20 === 0 ? depth : mm % 10 === 0 ? 5 : 3;
      var tick = { width: 1, height: 1, fill: mm % 20 === 0 ? "#999" : "#777" };
      tick[vertical ? "y" : "x"] = at;
      tick[vertical ? "x" : "y"] = depth - size - (size === depth ? 0 : 1);
      tick[vertical ? "width" : "height"] = size;
      add(svg, "rect", tick);
      if (mm % 20 !== 0) continue;
      var label = String(Math.abs(mm));
      if (vertical) {
        var stack = add(svg, "text", { y: at + 8 });
        label.split("").forEach(function (digit, i) {
          add(stack, "tspan", { x: 1, dy: i ? 8 : 0 }, digit);
        });
      } else {
        add(svg, "text", { x: at + 1, y: 9 }, label);
      }
    }
  }

  function drawAll() { draw("ruler-h", false); draw("ruler-v", true); }
  drawAll();
  window.addEventListener("resize", drawAll);
})();
```
